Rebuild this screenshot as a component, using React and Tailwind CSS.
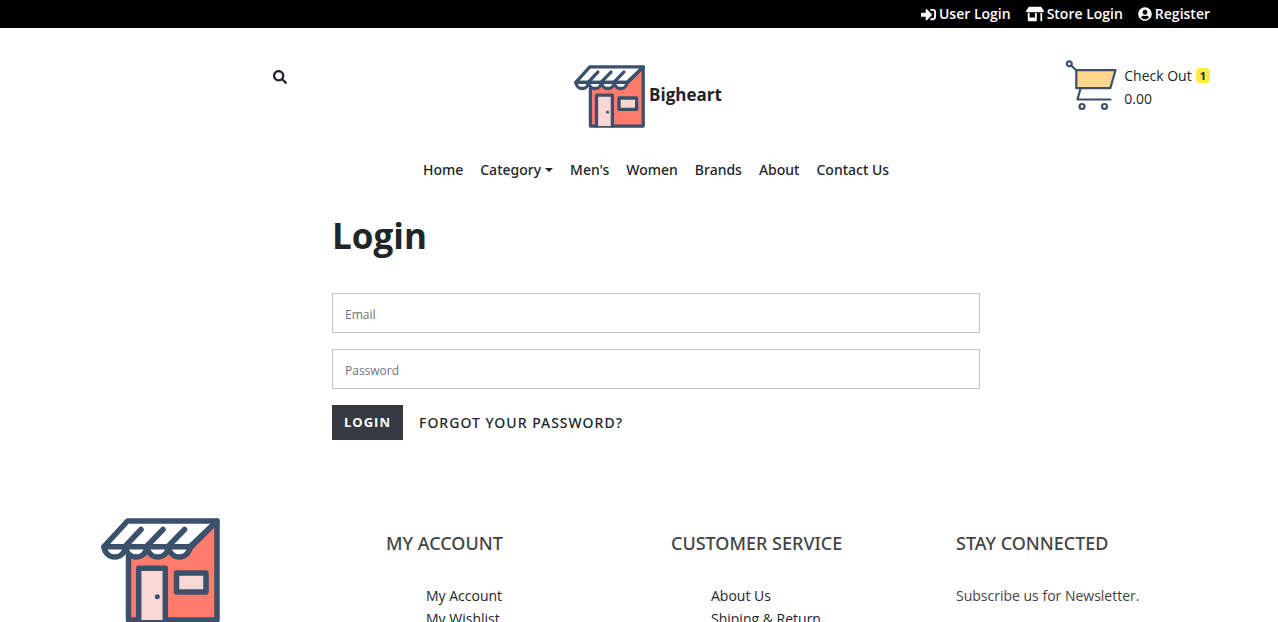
import { FaSearch, FaSignInAlt, FaStoreAlt, FaUserCircle } from "react-icons/fa";

function StoreLogo({ className }) {
  return (
    <svg viewBox="0 0 119 105" className={className} fill="none" stroke="#3a506b" strokeWidth="5.500" strokeLinejoin="round" strokeLinecap="round" aria-hidden="true">
      <path d="M27.500 28V102H116V3L90 29Z" fill="#ff7b6c" />
      <path d="M26.500 3H116L89 28.700H3Z" fill="#fff" />
      <path d="M3 28.700a10.800 11.500 0 0 0 21.500 0a10.800 11.500 0 0 0 21.500 0a10.800 11.500 0 0 0 21.500 0a10.800 11.500 0 0 0 21.500 0Z" fill="#fff" />
      <path d="M40 11.500L24.500 28M62 11.500L46 28M83.500 11.500L67.500 28" />
      <path d="M37.700 102V50.300H64.300V102" fill="#f9d7d4" />
      <rect x="75.500" y="55" width="29.500" height="19" fill="#f9d7d4" />
      <circle cx="56.300" cy="78.700" r="2.500" fill="#3a506b" stroke="none" />
    </svg>
  );
}

function CartIcon({ className }) {
  return (
    <svg viewBox="0 0 52 52" className={className} fill="none" stroke="#3a506b" strokeWidth="2.200" strokeLinejoin="round" strokeLinecap="round" aria-hidden="true">
      <circle cx="4.300" cy="3.800" r="2.500" />
      <path d="M6.300 5.700L11.300 10.200" />
      <path d="M11.300 10.200H50.500L45.300 28.200H11.300Z" fill="#ffd78c" />
      <path d="M15.500 28.500L12.500 39.500H45.500" />
      <circle cx="17" cy="46.500" r="2.500" />
      <circle cx="39.500" cy="46.500" r="2.500" />
    </svg>
  );
}

const topLinks = [
  { label: "User Login", Icon: FaSignInAlt, size: "h-[15px] w-[15px]" },
  { label: "Store Login", Icon: FaStoreAlt, size: "h-4 w-[18px]" },
  { label: "Register", Icon: FaUserCircle, size: "h-[14px] w-[14px]" },
];

const navLinks = ["Home", "Category", "Men's", "Women", "Brands", "About", "Contact Us"];

function FooterTitle({ children }) {
  return <h2 className="font-['Noto_Sans',sans-serif] text-lg leading-5 font-medium text-[#444]">{children}</h2>;
}

function FooterList({ title, items }) {
  return (
    <div className="px-[15px] pt-[15px]">
      <FooterTitle>{title}</FooterTitle>
      <ul className="mt-[31px] pl-10 text-sm leading-[23px] text-[#212529]">
        {items.map((item) => (
          <li key={item}><a href="#">{item}</a></li>
        ))}
      </ul>
    </div>
  );
}

export default function App() {
  return (
    <div className="h-screen overflow-hidden bg-white font-['Open_Sans','Noto_Sans',sans-serif] text-[#212529]">
      <div className="bg-black pl-[34px]">
        <div className="mx-auto flex h-7 max-w-[1140px] items-center justify-end gap-[15px] px-4 text-sm font-semibold text-white">
          {topLinks.map(({ label, Icon, size }) => (
            <a key={label} href="#" className="flex items-center gap-[3px]">
              <Icon className={size} />
              {label}
            </a>
          ))}
        </div>
      </div>

      <div className="pl-[34px]">
        <header className="mx-auto max-w-[1140px]">
          <div className="grid grid-cols-3 items-start pt-8">
            <div className="flex justify-center pt-2 pl-2">
              <button type="button" aria-label="Search" className="p-[2px]">
                <FaSearch className="h-[14px] w-[14px]" />
              </button>
            </div>
            <a href="#" className="flex items-center justify-center gap-1 pt-[5px] pr-4 text-[17px] font-bold">
              <StoreLogo className="h-[63px] w-[71px]" />
              <span className="pb-1">Bigheart</span>
            </a>
            <a href="#" className="flex justify-end gap-[7px] pr-4 text-sm leading-[23px]">
              <CartIcon className="h-[52px] w-[52px]" />
              <span className="pt-1">
                <span className="flex items-center gap-1">
                  Check Out
                  <span className="rounded bg-[#ffec42] px-1 text-[11px] leading-[15px] font-bold">1</span>
                </span>
                <span className="block">0.00</span>
              </span>
            </a>
          </div>

          <nav className="mt-[30px] flex justify-center gap-[17px] font-['Noto_Sans',sans-serif] text-sm leading-6 font-medium">
            {navLinks.map((label) => (
              <a key={label} href="#" className="flex items-center gap-1">
                {label}
                {label === "Category" && (
                  <span className="border-x-4 border-t-4 border-x-transparent border-t-[#212529]" />
                )}
              </a>
            ))}
          </nav>
        </header>

        <main className="mx-auto mt-8 max-w-[648px]">
          <h1 className="text-[35px] leading-[44px] font-bold">Login</h1>
          <form className="mt-[35px] flex flex-col gap-4" onSubmit={(e) => e.preventDefault()}>
            <input type="email" aria-label="Email" placeholder="Email" className="h-10 w-full border border-[#c4c4c4] px-3 pt-[3px] text-xs placeholder:text-[#6c757d]" />
            <input type="password" aria-label="Password" placeholder="Password" className="h-10 w-full border border-[#c4c4c4] px-3 pt-[3px] text-xs placeholder:text-[#6c757d]" />
            <div className="flex items-center gap-4">
              <button type="submit" className="h-[35px] bg-[#343a40] px-3 text-[13px] font-bold tracking-[1px] text-white">LOGIN</button>
              <a href="#" className="font-['Noto_Sans',sans-serif] text-sm font-medium tracking-[1px]">FORGOT YOUR PASSWORD?</a>
            </div>
          </form>
        </main>

        <footer className="mx-auto mt-[78px] grid max-w-[1140px] grid-cols-4">
          <div className="px-[15px]">
            <StoreLogo className="h-[105px] w-[119px]" />
          </div>
          <FooterList title="MY ACCOUNT" items={["My Account", "My Wishlist"]} />
          <FooterList title="CUSTOMER SERVICE" items={["About Us", "Shiping & Return"]} />
          <div className="px-[15px] pt-[15px]">
            <FooterTitle>STAY CONNECTED</FooterTitle>
            <p className="mt-[31px] text-sm leading-[23px] text-[#444]">Subscribe us for Newsletter.</p>
          </div>
        </footer>
      </div>
    </div>
  );
}
